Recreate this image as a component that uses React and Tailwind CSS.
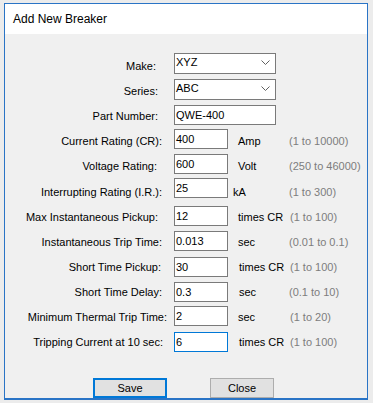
const rows = [
  { label: "Make:", value: "XYZ", kind: "combo", labelPr: 18, pt: 7, mt: 0 },
  { label: "Series:", value: "ABC", kind: "combo", labelPr: 16, pt: 6, mt: 5 },
  { label: "Part Number:", value: "QWE-400", kind: "wide", labelPr: 16, pt: 5, mt: 5 },
  { label: "Current Rating (CR):", value: "400", unit: "Amp", unitPl: 10, range: "(1 to 10000)", labelPr: 12, pt: 6, mt: 4 },
  { label: "Voltage Rating:", value: "600", unit: "Volt", unitPl: 10, range: "(250 to 46000)", labelPr: 17, pt: 6, mt: 5 },
  { label: "Interrupting Rating (I.R.):", value: "25", unit: "kA", unitPl: 5, range: "(1 to 300)", labelPr: 12, pt: 8, mt: 4 },
  { label: "Max Instantaneous Pickup:", value: "12", unit: "times CR", unitPl: 10, range: "(1 to 100)", rangePl: 1, labelPr: 16, pt: 5, mt: 7 },
  { label: "Instantaneous Trip Time:", value: "0.013", unit: "sec", unitPl: 10, range: "(0.01 to 0.1)", labelPr: 12, pt: 5, mt: 5 },
  { label: "Short Time Pickup:", value: "30", unit: "times CR", unitPl: 11, range: "(1 to 100)", rangePl: 1, labelPr: 13, pt: 4, mt: 6 },
  { label: "Short Time Delay:", value: "0.3", unit: "sec", unitPl: 11, range: "(0.1 to 10)", labelPr: 12, pt: 4, mt: 5 },
  { label: "Minimum Thermal Trip Time:", value: "2", unit: "sec", unitPl: 10, range: "(1 to 20)", rangePl: 1, labelPr: 7, pt: 5, mt: 4 },
  { label: "Tripping Current at 10 sec:", value: "6", unit: "times CR", unitPl: 11, range: "(1 to 100)", rangePl: 1, labelPr: 11, pt: 4, mt: 6, focused: true },
];

function Chevron() {
  return (
    <svg width="9" height="5" viewBox="0 0 9 5" className="mt-[6px] shrink-0">
      <path d="M0.5 0.5 L4.5 4.5 L8.5 0.5" fill="none" stroke="#606060" strokeWidth="1" />
    </svg>
  );
}

function Field({ row }) {
  if (row.kind === "combo") {
    return (
      <div className="flex h-[21px] w-[102px] items-start justify-between border border-[#7a7a7a] bg-white pl-[1px] pr-[5px]">
        <span className="pt-[2px]">{row.value}</span>
        <Chevron />
      </div>
    );
  }
  const width = row.kind === "wide" ? "w-[102px]" : "w-[54px]";
  const border = row.focused ? "border-[#0078d7]" : "border-[#7a7a7a]";
  return (
    <div className={`h-[20px] ${width} border ${border} bg-white pl-[1px] pt-[3px]`}>
      {row.value}
    </div>
  );
}

function FormRow({ row }) {
  return (
    <div className="flex items-start" style={{ marginTop: row.mt }}>
      <div
        className="w-[169px] shrink-0 text-right text-black"
        style={{ paddingRight: row.labelPr, paddingTop: row.pt }}
      >
        {row.label}
      </div>
      <Field row={row} />
      {row.unit && (
        <>
          <div className="w-[61px] shrink-0 text-black" style={{ paddingLeft: row.unitPl, paddingTop: row.pt }}>
            {row.unit}
          </div>
          <div className="text-[#7d7d7d]" style={{ paddingLeft: row.rangePl || 0, paddingTop: row.pt }}>
            {row.range}
          </div>
        </>
      )}
    </div>
  );
}

export default function App() {
  return (
    <div
      className="h-[403px] w-[373px] bg-[#ececec] pl-[4px] pt-[3px] text-[11px] leading-[13px]"
      style={{ fontFamily: '"Liberation Sans", Arial, sans-serif' }}
    >
      <div className="flex h-[397px] w-[364px] flex-col border border-b-2 border-[#2a74c6] bg-[#f0f0f0]">
        <div className="flex h-[30px] shrink-0 items-center bg-white pl-[8px] text-[12px] text-black">
          Add New Breaker
        </div>
        <div className="flex flex-col pt-[19px]">
          {rows.map((row) => (
            <FormRow key={row.label} row={row} />
          ))}
          <div className="mt-[26px] flex items-start">
            <button className="ml-[88px] h-[20px] w-[74px] border-2 border-[#0078d7] bg-[#e1e1e1] text-black">
              Save
            </button>
            <button className="ml-[43px] h-[20px] w-[64px] border border-[#adadad] bg-[#e1e1e1] text-black">
              Close
            </button>
          </div>
        </div>
      </div>
    </div>
  );
}
